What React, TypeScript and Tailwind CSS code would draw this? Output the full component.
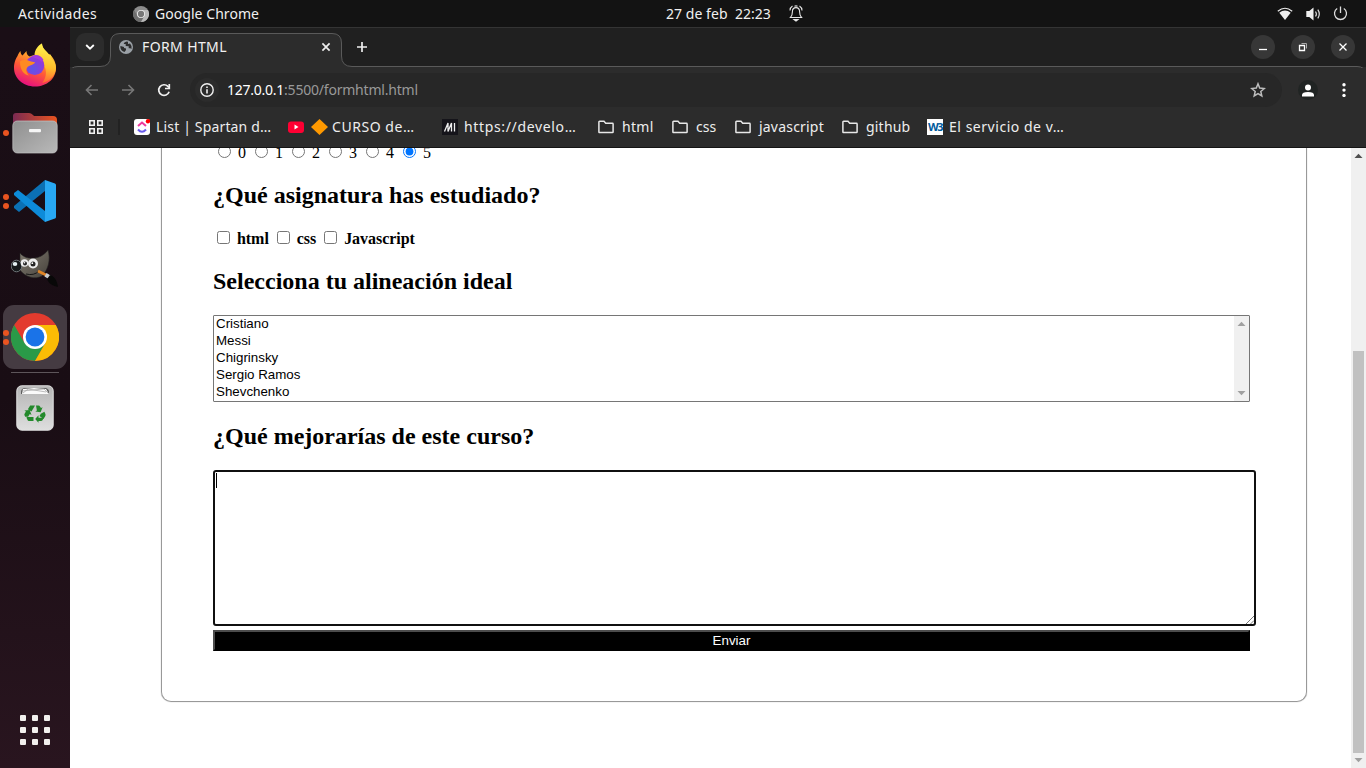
import React from "react";

const ui = "font-['Noto_Sans',sans-serif]";

function Chromium({ size, mono }: { size: number; mono?: boolean }) {
  const c = mono
    ? ["#8c8c8c", "#6e6e6e", "#b9b9b9", "#eeeeee", "#777777"]
    : ["#e33b2e", "#2a9a48", "#fbbc05", "#ffffff", "#1a73e8"];
  return (
    <svg width={size} height={size} viewBox="0 0 48 48">
      <circle cx="24" cy="24" r="24" fill={c[0]} />
      <path d="M3.2 12A24 24 0 0 0 24 48L34.4 30 24 24 13.6 30Z" fill={c[1]} />
      <path d="M24 48A24 24 0 0 0 44.8 12H24L34.4 30Z" fill={c[2]} />
      <circle cx="24" cy="24" r="12" fill={c[3]} />
      <circle cx="24" cy="24" r="9.4" fill={c[4]} />
    </svg>
  );
}

function Firefox() {
  return (
    <svg width="42" height="44" viewBox="0 0 42 44">
      <defs>
        <linearGradient id="fx" x1=".8" y1="0" x2=".4" y2="1">
          <stop offset="0" stopColor="#fff44f" />
          <stop offset=".35" stopColor="#ffa62a" />
          <stop offset=".65" stopColor="#ff5a36" />
          <stop offset="1" stopColor="#e7127d" />
        </linearGradient>
        <linearGradient id="fy" x1=".5" y1="0" x2=".4" y2="1">
          <stop offset="0" stopColor="#fff44f" />
          <stop offset=".6" stopColor="#ffbd2c" />
          <stop offset="1" stopColor="#ff6236" />
        </linearGradient>
        <radialGradient id="fp" cx=".4" cy=".7" r=".7">
          <stop offset="0" stopColor="#5b56e8" />
          <stop offset="1" stopColor="#9a35d6" />
        </radialGradient>
      </defs>
      <path d="M6.500 8c0 2 .8 3.500 2 4.500L12.500 8c0 2.500.8 4.500 3 5.500l6-2c1-4 3-8 6.500-11 0 4 3 7 6 10.500l2 .5c5 5 6 10 6 13.500C42 35.500 33 43.500 21 43.500S0 35 0 25c0-6 2-9.500 3.500-12 .8-2 1.800-4 3-5z" fill="url(#fx)" />
      <path d="M20.500 11.500c.5-5 3.500-9 7.500-11 0 5 4.500 7 7.500 11.500l1-.5 1 4c3 3 5 6.500 4.300 11-1 7-7 12-13.500 13.500 4-5 5-12 1.500-18-2-3.500-5-6-9.300-10.500z" fill="url(#fy)" />
      <circle cx="20.800" cy="22.500" r="9.500" fill="url(#fp)" />
      <path d="M6 18.500c4-2.500 8-1.500 11 0l4 .8c-.5 2-4 3-6 3.700-3.500 2-3.500 6 0 9.500-5-1-9-5-9-14z" fill="#ff8a22" />
      <path d="M17 14c4-3.500 10-2 12.500 3l-2 2c-2-3-6-4-10.500-5z" fill="#a43be0" />
    </svg>
  );
}

function Files() {
  return (
    <svg width="46" height="42" viewBox="0 0 46 42">
      <defs>
        <linearGradient id="fb"><stop stopColor="#7b2a52" /><stop offset="1" stopColor="#e95420" /></linearGradient>
        <linearGradient id="fg" x1="0" y1="0" x2="1" y2="1"><stop stopColor="#8f8f8f" /><stop offset="1" stopColor="#b9b9b9" /></linearGradient>
      </defs>
      <path d="M1 14V4q0-3 3-3h13q2 0 4 2l1 1h19q4 0 4 4v9H1z" fill="url(#fb)" />
      <rect x=".8" y="9" width="44.4" height="32" rx="4.5" fill="url(#fg)" stroke="#c4c4c4" strokeWidth=".7" />
      <rect x="17" y="17" width="12" height="3.2" rx="1" fill="#f5f5f5" />
    </svg>
  );
}

function Code() {
  return (
    <svg width="42" height="42" viewBox="0 0 42 42">
      <path d="M31 0v11L5 32l-5-4q-1-1 0-2z" fill="#0b70b4" />
      <path d="M0 15q-1-1 0-2l4-3 27 21v11z" fill="#0d8bd9" />
      <path d="M31 0l10 3.500q1 .5 1 1.500v32q0 1-1 1.500L31 42z" fill="#28a8f3" />
    </svg>
  );
}

function Gimp() {
  return (
    <svg width="48" height="40" viewBox="0 0 48 40">
      <defs><linearGradient id="gm" x1="0" y1="0" x2="1" y2="1"><stop stopColor="#817b70" /><stop offset="1" stopColor="#45413b" /></linearGradient></defs>
      <path d="M9 4c5 7 20 8 28-3 3 10 0 20-6 26-7 4-17 1-22-6z" fill="url(#gm)" stroke="#222" strokeWidth=".6" />
      <ellipse cx="5.500" cy="17" rx="5.300" ry="5.800" fill="#15191b" stroke="#6e7578" strokeWidth="1" />
      <ellipse cx="4" cy="15" rx="2.300" ry="2" fill="#e4eff2" />
      <circle cx="13.500" cy="14" r="3.800" fill="#eee" />
      <circle cx="22" cy="14.500" r="5" fill="#eee" />
      <circle cx="14" cy="14.500" r="2" fill="#242424" />
      <circle cx="22" cy="15" r="2.500" fill="#242424" />
      <circle cx="13.500" cy="13.800" r=".8" fill="#fff" />
      <circle cx="21.300" cy="14.200" r=".9" fill="#fff" />
      <path d="M15 25q8 2 13-3" stroke="#161616" fill="none" />
      <path d="M27 22l10 5" stroke="#e08426" strokeWidth="2.800" />
      <path d="M34.500 25.700l5.500 3.400" stroke="#c8ccd0" strokeWidth="4" />
      <path d="M39 26c4 1 7 5 8 12-5-1-9-3-11-8z" fill="#080808" />
    </svg>
  );
}

function Trash() {
  return (
    <svg width="38" height="46" viewBox="0 0 38 46">
      <defs><linearGradient id="tr" x1="0" y1="0" x2="0" y2="1"><stop stopColor="#b5b5b5" /><stop offset="1" stopColor="#dedede" /></linearGradient></defs>
      <rect x=".8" y=".8" width="36.400" height="44.400" rx="5" fill="url(#tr)" stroke="#e2e2e2" />
      <path d="M5 9V7q0-3 3-4h22q3 1 3 4v2z" fill="#5d5d5d" />
      <path d="M6 9l1-5 11-1 12 1 3 5z" fill="#fafafa" />
      <path d="M7 8l5-4 18 3M6 6l22-2 4 4" stroke="#a0a0a0" strokeWidth=".7" fill="none" />
      <g fill="#23892b">
        <path d="M14.200 20.500h4.800l-3.500 6-3.700-2.200z" />
        <path d="M20 20.500h2.500q1 0 1.500 1l1 1.600 1.600-.9-2 5-5.300-.7 1.600-1z" />
        <path d="M24.800 28.800l3.600-2.100.9 2q.7 1.300-.1 2.500l-1.700 2.800-4-3z" />
        <path d="M22.500 32.800h5.300l-1.300 2.500q-.5.700-1.500.7h-2.500v1.800l-3.300-3.800 3.300-3.700z" />
        <path d="M12.700 36h4.800v-4h-6.300l-.8.500 1.300 2.700q.4.800 1 .8z" />
        <path d="M9.200 31.800l-.7-1.500q-.4-.8.100-1.600l1.300-2.200-1.500-.9 5.300-.6 1.800 4.900-1.700-1-1.700 2.900z" />
      </g>
    </svg>
  );
}

function Dots({ n }: { n: number }) {
  return (
    <div className="absolute left-[3px] inset-y-0 flex flex-col items-center justify-center gap-[3px]">
      <i className="block size-[6px] rounded-full bg-[#e95420]" />
      {n > 1 && <i className="block size-[6px] rounded-full bg-[#e95420]" />}
    </div>
  );
}

function DockItem({ children, dots = 0, active = false }: { children: React.ReactNode; dots?: number; active?: boolean }) {
  return (
    <div className="relative flex h-[68px] w-full shrink-0 items-center justify-center">
      <div className={active ? "flex size-16 items-center justify-center rounded-[11px] bg-[#453b42]" : "flex size-16 items-center justify-center"}>{children}</div>
      {dots > 0 && <Dots n={dots} />}
    </div>
  );
}

function Dock() {
  return (
    <aside className="flex w-[70px] shrink-0 flex-col bg-linear-to-b from-[#1a0e16] via-[#190d14] to-[#29151f] pt-1">
      <DockItem><Firefox /></DockItem>
      <DockItem dots={1}><Files /></DockItem>
      <DockItem dots={2}><Code /></DockItem>
      <DockItem><Gimp /></DockItem>
      <DockItem dots={2} active><Chromium size={48} /></DockItem>
      <div className="mx-auto mt-px h-px w-12 bg-[#5d555a]" />
      <div className="mt-px"><DockItem><Trash /></DockItem></div>
      <div className="mx-auto mt-auto mb-[23px] grid grid-cols-3 gap-[6px]">
        {Array.from({ length: 9 }, (_, i) => <i key={i} className="block size-[6px] rounded-[1px] bg-[#f2f0ee]" />)}
      </div>
    </aside>
  );
}

function TopBar() {
  return (
    <header className={`${ui} grid h-[27px] shrink-0 grid-cols-[666px_1fr_auto] items-center bg-[#131313] text-[14px] leading-[27px] text-[#f0f0f0]`}>
      <div className="flex items-center pl-[18px]">
        <span className="w-[115px] tracking-[0.4px]">Actividades</span>
        <Chromium size={16} mono />
        <span className="ml-[6px] tracking-[0.05px]">Google Chrome</span>
      </div>
      <div className="flex items-center">
        <span className="w-[69px] -mt-px tracking-[0.05px] whitespace-nowrap">27 de feb</span>
        <span className="w-[54px] -mt-px">22:23</span>
        <svg width="14" height="17" viewBox="0 0 14 17" fill="none" stroke="#e8e8e8" strokeWidth="1.1">
          <path d="M1.5 12.5h11q-1.9-2-1.9-5.8C10.600 4 9.400 2.600 7 2.600S3.400 4 3.400 6.700Q3.400 10.500 1.500 12.500zM1 5.500q0-3 2.500-4.500M13 5.500q0-3-2.500-4.500M5.500 1.300q1.500-.8 3 0" />
          <path d="M5 14.500h4l-2 1.500z" fill="#e8e8e8" />
        </svg>
      </div>
      <div className="flex items-center pr-[18px]">
        <svg width="16" height="14" viewBox="0 0 16 14"><path d="M.8 4.300Q8-1.800 15.200 4.300" fill="none" stroke="#eee" strokeWidth="1.200" /><path d="M2.300 5.800Q8 1.200 13.700 5.800L8 13z" fill="#eee" /></svg>
        <svg className="ml-[13px]" width="16" height="14" viewBox="0 0 16 14"><path d="M.3 4h3L7.500.5v13L3.300 10h-3z" fill="#eee" /><path d="M9.500 4.500q1.800 2.500 0 5M11.800 2.600q3 4.400 0 8.800" fill="none" stroke="#ddd" strokeWidth="1.200" /></svg>
        <svg className="ml-[11px]" width="15" height="15" viewBox="0 0 15 15" fill="none" stroke="#ddd" strokeWidth="1.300"><path d="M7.500.5v6.500M4.200 2.500a6 6 0 1 0 6.600 0" /></svg>
      </div>
    </header>
  );
}

function TabStrip() {
  return (
    <div className="relative flex h-10 shrink-0 items-start border-t border-[#343434] bg-[#202020] text-[#f1f1f1]">
      <svg className="absolute left-0 top-0" width="1296" height="40" viewBox="0 0 1296 40">
        <path d="M-1 46Q0 38.500 8 38.500H30Q40.500 38.500 40.500 28V15Q40.500 5.500 50 5.500H262Q271.500 5.500 271.500 15V28Q271.500 38.500 282 38.500H1287Q1295 38.500 1296 46" fill="#2c2c2c" stroke="#5a5a5a" />
      </svg>
      <div className="relative flex w-full items-center pt-[5px]">
        <div className="ml-[6px] flex size-7 items-center justify-center rounded-[9px] bg-[#2c2c2c]">
          <svg width="10" height="6" viewBox="0 0 10 6" fill="none" stroke="#fff" strokeWidth="1.800"><path d="M1.200 1L5 4.700 8.800 1" /></svg>
        </div>
        <svg className="ml-[15px]" width="14" height="14" viewBox="0 0 14 14"><circle cx="7" cy="7" r="7" fill="#9aa0a6" /><path d="M7.500 1.500Q4.800 2 4.700 4h2v2l3 .3v2h1.600L12.500 9q.6-3.500-1.500-5.500L9 4V1.700zM1.500 6l3.500 1v1l2 .5v1.500L5.500 12Q1.700 11 1.300 7z" fill="#2c2c2c" /></svg>
        <span className={`${ui} ml-[9px] w-[179px] text-[14px] leading-5 tracking-[0.38px]`}>FORM HTML</span>
        <svg width="10" height="10" viewBox="0 0 10 10" stroke="#eee" strokeWidth="1.700"><path d="M1.400 1.400l7.200 7.200M8.600 1.400L1.400 8.600" /></svg>
        <svg className="ml-[25px]" width="12" height="12" viewBox="0 0 12 12" stroke="#eee" strokeWidth="1.700"><path d="M6 1v10M1 6h10" /></svg>
        <div className="mr-[11px] ml-auto flex gap-4">
          {["M4 10.500h8", "M4.500 6.500h5v5h-5z", "M4.500 4.500l7 7M11.500 4.500l-7 7"].map((d, i) => (
            <div key={d} className="flex size-6 items-center justify-center rounded-full bg-[#373737]">
              <svg width="16" height="16" viewBox="0 0 16 16" fill="none" stroke="#fff" strokeWidth="1.300">
                <path d={d} />
                {i === 1 && <path d="M6.500 4.500h5v5" stroke="#aaa" strokeWidth="1" />}
              </svg>
            </div>
          ))}
        </div>
      </div>
    </div>
  );
}

function Toolbar() {
  return (
    <div className="flex h-[46px] shrink-0 items-center bg-[#2c2c2c] pl-[15px]">
      <svg width="14" height="12" viewBox="0 0 14 12" fill="none" stroke="#777" strokeWidth="1.600"><path d="M13 6H1.500M6.500 1l-5 5 5 5" /></svg>
      <svg className="ml-[22px]" width="14" height="12" viewBox="0 0 14 12" fill="none" stroke="#777" strokeWidth="1.600"><path d="M1 6h11.500M7.500 1l5 5-5 5" /></svg>
      <svg className="ml-[22px]" width="14" height="14" viewBox="0 0 14 14" fill="none" stroke="#f0f0f0" strokeWidth="1.700"><path d="M12.100 8.700A5.300 5.300 0 1 1 10.900 3.400L12 4.500" /><path d="M12.300 1v4.500H8" /></svg>
      <div className="ml-[19px] flex h-[34px] w-[1092px] items-center rounded-full bg-[#272727] pl-[5px]">
        <div className="flex size-6 items-center justify-center rounded-full bg-[#2c2c2c]">
          <svg width="14" height="14" viewBox="0 0 14 14" fill="none" stroke="#f0f0f0" strokeWidth="1.400"><circle cx="7" cy="7" r="6.200" /><path d="M7 6.200v4.300M7 3.400v1.500" strokeWidth="1.600" /></svg>
        </div>
        <span className={`${ui} ml-[8px] text-[14px] leading-5 text-white tracking-[-0.25px] whitespace-nowrap`}>127.0.0.1<span className="text-[#999] tracking-[-0.21px]">:5500/formhtml.html</span></span>
        <svg className="mr-[16px] ml-auto" width="16" height="16" viewBox="0 0 16 16" fill="none" stroke="#bdbdbd" strokeWidth="1.500"><path d="M8 1.800l1.700 4.300 4.600.4-3.500 3 1 4.500L8 11.600 4.200 14l1-4.500-3.500-3 4.600-.4z" /></svg>
      </div>
      <div className="ml-[16px] flex size-5 items-center justify-center rounded-full bg-[#202423]">
        <svg width="12" height="13" viewBox="0 0 12 13" fill="#fff"><circle cx="6" cy="3.500" r="3" /><path d="M0 12.500V11q0-3 6-3t6 3v1.500z" /></svg>
      </div>
      <svg className="ml-[24px]" width="4" height="14" viewBox="0 0 4 14" fill="#fff"><circle cx="2" cy="1.800" r="1.700" /><circle cx="2" cy="7.100" r="1.700" /><circle cx="2" cy="12.400" r="1.700" /></svg>
    </div>
  );
}

function Folder() {
  return <svg width="16" height="14" viewBox="0 0 16 14" fill="none" stroke="#e8e8e8" strokeWidth="1.500"><path d="M.9 2Q.9 1.300 1.600 1.300H6l1.700 1.900h6.700q.7 0 .7.700v8q0 .7-.7.7H1.600q-.7 0-.7-.7z" /></svg>;
}

function Mark({ icon, text, cls }: { icon: React.ReactNode; text: string; cls: string }) {
  return <div className={`flex shrink-0 items-center whitespace-nowrap ${cls}`}><span className="flex w-4 shrink-0">{icon}</span><span>{text}</span></div>;
}

function Bookmarks() {
  return (
    <nav className={`${ui} flex h-[35px] shrink-0 items-start border-b border-[#151515] bg-[#2c2c2c] pl-[19px] text-[14px] leading-5 text-[#eee]`}>
      <div className="flex h-[28px] w-full items-center">
        <svg className="shrink-0" width="14" height="14" viewBox="0 0 14 14" fill="none" stroke="#f0f0f0" strokeWidth="1.600"><path d="M.8.8h4.400v4.400H.8zM8.800.8h4.400v4.400H8.800zM.8 8.800h4.400v4.400H.8zM8.800 8.800h4.400v4.400H8.800z" /></svg>
        <i className="ml-[15px] h-4 w-[2px] shrink-0 bg-[#222]" />
        <Mark cls="ml-[14px] w-[154px] gap-[6px] tracking-[0.16px]" text="List | Spartan d…" icon={
          <svg width="16" height="16" viewBox="0 0 16 16"><rect width="16" height="16" rx="3" fill="#fff" /><path d="M4 7l4-3.500L12 7" stroke="#ed3a9c" strokeWidth="2" fill="none" /><path d="M4 10.500q4 4.500 8 0" stroke="#695bea" strokeWidth="2" fill="none" /><circle cx="14" cy="2.200" r="2.200" fill="red" /></svg>
        } />
        <div className="flex w-[154px] shrink-0 items-center whitespace-nowrap">
          <svg width="16" height="16" viewBox="0 0 16 16"><rect y="2.500" width="16" height="11.500" rx="3" fill="#ff0033" /><path d="M6.500 5.500v5L10.500 8z" fill="#fff" /></svg>
          <svg className="ml-[7px]" width="17" height="16" viewBox="0 0 17 16"><path d="M8.500 0L17 8l-8.500 8L0 8z" fill="#f90" /></svg>
          <span className="ml-[4px] tracking-[0.55px]">CURSO de…</span>
        </div>
        <Mark cls="w-[156px] gap-[6px] tracking-[0.65px]" text="https://develo…" icon={
          <svg width="16" height="16" viewBox="0 0 16 16"><rect width="16" height="16" fill="#15141a" /><path d="M2.500 12.500L6 4v8.500L9.500 4v8.500M12.500 4v8.500" stroke="#eee" fill="none" strokeWidth="1.300" /></svg>
        } />
        <Mark cls="w-[74px] gap-2 tracking-[0.3px]" text="html" icon={<Folder />} />
        <Mark cls="w-[63px] gap-2" text="css" icon={<Folder />} />
        <Mark cls="w-[107px] gap-2 tracking-[0.2px]" text="javascript" icon={<Folder />} />
        <Mark cls="w-[85px] gap-2 tracking-[0.2px]" text="github" icon={<Folder />} />
        <Mark cls="gap-[6px] tracking-[0.53px]" text="El servicio de v…" icon={
          <span className="flex size-4 items-center justify-center overflow-hidden bg-white font-['Open_Sans',sans-serif] text-[11px] font-bold tracking-[-1.500px] text-[#005a9c]">W3</span>
        } />
      </div>
    </nav>
  );
}

function Heading({ children }: { children: React.ReactNode }) {
  return <h2 className="h-[27px] text-[24px] leading-[27px] font-bold">{children}</h2>;
}

function ScrollArrow({ down, color }: { down?: boolean; color: string }) {
  return <svg className="shrink-0" width="15" height="15" viewBox="0 0 15 15"><path d={down ? "M3.500 5h8l-4 4.200z" : "M3.500 10h8l-4-4.200z"} fill={color} /></svg>;
}

function Page() {
  return (
    <main className="flex min-h-0 flex-1 overflow-hidden bg-white font-['Liberation_Serif',serif] text-[16px] text-black">
      <div className="min-w-0 flex-1 pl-[91px]">
        <form className="flow-root h-[554px] w-[1146px] rounded-b-[10px] border border-t-0 border-[#999] pl-[51px] shadow-[0_0_1px_#999]">
          <div className="-mt-[6px] h-5 leading-5">
            {[0, 1, 2, 3, 4, 5].map((n) => (
              <React.Fragment key={n}>
                <input type="radio" name="nota" defaultChecked={n === 5} className="mt-[3px] mr-[3px] mb-0 ml-[5px] size-[13px]" /> <span>{n}</span>{" "}
              </React.Fragment>
            ))}
          </div>
          <div className="mt-5"><Heading>¿Qué asignatura has estudiado?</Heading></div>
          <div className="mt-[19px] h-5 font-bold leading-5 tracking-[-0.04px]">
            {["html", "css", "Javascript"].map((n) => (
              <React.Fragment key={n}>
                <input type="checkbox" className="mt-[3px] mr-[3px] mb-[3px] ml-[4px] size-[13px]" /> <span>{n}</span>{" "}
              </React.Fragment>
            ))}
          </div>
          <div className="mt-[20px]"><Heading>Selecciona tu alineación ideal</Heading></div>
          <div className="mt-5 flex h-[87px] w-[1037px] justify-between rounded-[1px] border border-[#767676] font-['Liberation_Sans',sans-serif] text-[13.333px] leading-[17px]">
            <ul className="pl-[2px]">
              {["Cristiano", "Messi", "Chigrinsky", "Sergio Ramos", "Shevchenko"].map((p) => <li key={p} className="h-[17px] leading-[15px]">{p}</li>)}
            </ul>
            <div className="flex w-[15px] flex-col justify-between bg-[#f0f0f0]">
              <ScrollArrow color="#a0a0a0" />
              <ScrollArrow down color="#a0a0a0" />
            </div>
          </div>
          <div className="mt-[21px]"><Heading>¿Qué mejorarías de este curso?</Heading></div>
          <div className="relative mt-5 h-[156px] w-[1043px]">
            <textarea className="block h-full w-full resize-none rounded-[3px] border-2 border-[#101010] outline-none" />
            <i className="absolute top-[3px] left-[3px] h-[15px] w-px bg-black" />
            <svg className="absolute right-[2px] bottom-[2px]" width="8" height="8" viewBox="0 0 8 8" stroke="#555" strokeWidth=".8"><path d="M0 8L8 0M4.500 8L8 4.500" /></svg>
          </div>
          <button type="button" className="mt-1 block h-[21px] w-[1037px] border-2 border-t-[#4c4c4c] border-r-black border-b-black border-l-[#4c4c4c] bg-black text-center font-['Liberation_Sans',sans-serif] text-[13.333px] leading-[17px] text-white">Enviar</button>
        </form>
      </div>
      <div className="flex w-[15px] shrink-0 flex-col bg-[#f0f0f0]">
        <ScrollArrow color="#505050" />
        <div className="mx-[2px] mt-[188px] h-[402px] w-[11px] bg-[#c1c1c1]" />
        <ScrollArrow down color="#a0a0a0" />
      </div>
    </main>
  );
}

export default function App() {
  return (
    <div className="flex h-[768px] w-[1366px] flex-col overflow-hidden bg-[#131313]">
      <TopBar />
      <div className="flex min-h-0 flex-1">
        <Dock />
        <div className="flex min-w-0 flex-1 flex-col">
          <TabStrip />
          <Toolbar />
          <Bookmarks />
          <Page />
        </div>
      </div>
    </div>
  );
}
